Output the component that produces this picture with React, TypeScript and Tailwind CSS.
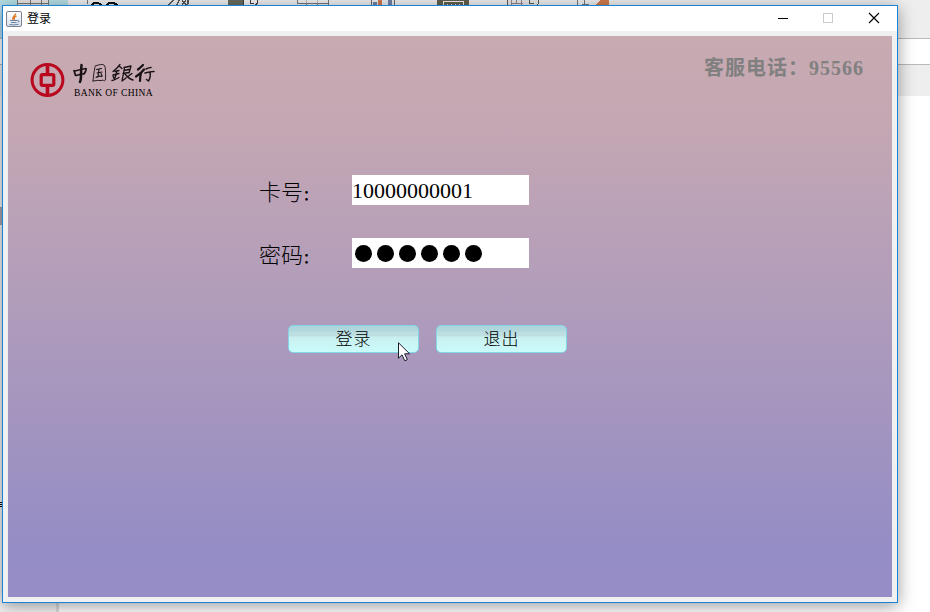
import React from "react";

const sans = "font-['Liberation_Sans','Noto_Sans_CJK_SC',sans-serif]";
const serif = "font-['Liberation_Serif','Noto_Sans_CJK_SC',serif]";

function ToolbarIcons() {
  return (
    <svg className="block h-[5px] w-full" viewBox="0 0 930 5" shapeRendering="crispEdges" fill="none">
      <rect width="68" height="5" fill="#b5dfe6" />
      <path d="M17 0h32v5H17z" fill="#e6e3e3" />
      <path d="M17.5 0v5M30.5 0v5M41.5 0v5M48.5 0v5M17 3.5h32" stroke="#777575" />
      <path d="M87.5 0v4M297.5 0v4M306.5 0v5M317.5 0v5M328.5 0v5M298 3.5h30" stroke="#777575" />
      <path d="M298 0h30v3h-30z" fill="#f1f1f1" opacity=".6" />
      <path d="M91 5q5-4 11 0M106 5q5-4 12 0" stroke="#111" strokeWidth="2" />
      <path d="M169 5l4-5M179 0l-2 5M182 1l4 3M186 1l-4 3M188 0q1 2-1 5" stroke="#555" strokeWidth="1.5" />
      <path d="M228 0h15v5h-15z" fill="#686b60" />
      <path d="M243 0h15v5h-15z" fill="#f3f3f3" />
      <path d="M243.500 0v5M250.500 0v3h3M257.500 0v3l-2 2" stroke="#443e42" />
      <path d="M371 0h24v5h-24z" fill="#e9edf1" />
      <path d="M373 2h4v3h-4zM388 0h4v5h-4z" fill="#6d80a5" />
      <path d="M378 0h4v5h-4z" fill="#d1784d" />
      <path d="M371.500 0v5M394.500 0v5" stroke="#666458" />
      <path d="M437 0h32v5h-32z" fill="#62604f" />
      <path d="M443.500 5V1.500h20V5" stroke="#eee" />
      <path d="M447 4.500h15" stroke="#ddd" strokeDasharray="1 3" />
      <path d="M507 0h32v5h-32z" fill="#e8e8e8" />
      <path d="M507.500 0v5M538.500 0v3l-1 2M529.500 0v3h4" stroke="#575752" />
      <path d="M511.500 0v5M516.500 0v4M521.500 0v5M511 3.500h12" stroke="#97878b" />
      <path d="M577 0h28v5h-28z" fill="#eee" />
      <path d="M577.500 0v5M584.500 0v5M582 4.500h7" stroke="#777" />
      <path d="M600 0h9v5h-13z" fill="#d17b4c" />
    </svg>
  );
}

function Desktop() {
  return (
    <div className="flex h-full w-full flex-col bg-white">
      <div className="h-[38px] bg-[#eeeeee]">
        <ToolbarIcons />
        <div className="h-[33px] w-2 bg-[#b7dcec]" />
      </div>
      <div className="h-[27px] border-y border-[#bcb7bc] bg-white" />
      <div className="h-[31px] bg-[#eeeeee]" />
      <div className="flex h-[516px]">
        <div className="h-full w-[56px] bg-[#f3f3f3]">
          <div className="mt-[111px] h-[18px] w-[2px] bg-[#aaa7ad]" />
          <div className="mt-[277px] flex flex-col gap-px">
            <div className="h-px w-[2px] bg-black" />
            <div className="h-px w-[2px] bg-black" />
            <div className="h-px w-[2px] bg-black" />
          </div>
        </div>
        <div className="h-full w-[3px] bg-[#dddddd]" />
      </div>
    </div>
  );
}

function JavaIcon() {
  return (
    <svg className="h-4 w-4" viewBox="0 0 16 16" fill="none">
      <defs>
        <linearGradient id="java-bg" x2="0" y2="1">
          <stop stopColor="#fff" />
          <stop offset="1" stopColor="#d9e1ed" />
        </linearGradient>
      </defs>
      <rect x=".5" y=".5" width="15" height="15" rx="1.5" fill="url(#java-bg)" stroke="#7c8193" />
      <path d="M9.600 2.500C10 5 5 5.500 7.300 8.800M10.600 5C7.600 6.200 8 7.200 8.700 8.800" stroke="#df7928" strokeWidth="1.300" />
      <path d="M4 9.500h7.500q3 .2.500 2M5 11.500h5.500M3.500 13.500q4.500 1 9-.2" stroke="#66839f" />
    </svg>
  );
}

function TitleBar() {
  return (
    <header className="flex h-[25px] items-center bg-white pl-[3px] text-black">
      <JavaIcon />
      <h1 className={"ml-[5px] flex-1 text-[12px] leading-[22px] " + sans}>登录</h1>
      <svg className="h-[25px] w-[136px]" viewBox="0 0 136 25" fill="none">
        <path d="M17 12.500h10" stroke="#000" shapeRendering="crispEdges" />
        <path d="M62.500 7.500h9v9h-9z" stroke="#ccc" shapeRendering="crispEdges" />
        <path d="M108 7l10 10M118 7l-10 10" stroke="#000" strokeWidth="1.200" />
      </svg>
    </header>
  );
}

function BankLogo() {
  return (
    <div className="flex items-start">
      <svg className="h-[34px] w-[35px]" viewBox="0 0 35 34" fill="none" stroke="#b9081e">
        <circle cx="17.500" cy="17" r="15.400" strokeWidth="3" />
        <path d="M17.500 2v9M17.500 23v10" strokeWidth="3.600" />
        <rect x="11.200" y="11.700" width="12.600" height="10.600" rx="1.200" strokeWidth="3.200" />
      </svg>
      <div className="ml-[8px] w-[82px] text-black">
        <svg className="block h-[22px] w-[82px]" viewBox="0 0 82 22" fill="none" stroke="#181214" strokeLinecap="round" strokeLinejoin="round">
          <path d="M1 7.500l1.500 5M2 8q5-1.500 11-2.500q.5 2-2 5.500M3 12.500l8-2" strokeWidth="1.700" />
          <path d="M8.500 2q-.5 7-.5 11t-1 6" strokeWidth="2.500" />
          <path d="M22 4q-1.500 7-2 14M22 3q7-2.500 9-1q2 1 1.500 14q0 3-3 1M20 18q5-1 9-.5" strokeWidth=".9" />
          <path d="M23.500 6.500l5-1M24 10l5-1M26 6l-1 8M23 14.500q3-2 6-1M28 10.500l1 2" strokeWidth="1.100" />
          <path d="M47 1.500q-3 4-7 7M46 3l3 2.500M42 8.500l4-1M40 12l6-1.500M44 8q-1 5-3 9M40 13l1 2.500M39 17.500q4-1 7-3" strokeWidth="1.300" />
          <path d="M51 4.500l7-1.500-2 7M51.500 5l-2.500 13 4-3M51 7.500l5-1M50 10.500l6-1M52 11q4 5 8 6M59 10.500l-5 3.500" strokeWidth="1.300" />
          <path d="M70 2q-3 3-5 4.500M71 6.500q-3 4-8 7M68 10q-1 4-1 8" strokeWidth="2.200" />
          <path d="M73 6q3-1.500 5-1.500M72 10q5-1.500 9-1.500M77 9q1 5-1.500 9l-2-1.500" strokeWidth="1.500" />
        </svg>
        <div className="mt-[3px] whitespace-nowrap pl-px font-['Liberation_Serif',serif] text-[9.500px] leading-[10px] tracking-[0.400px]">
          BANK OF CHINA
        </div>
      </div>
    </div>
  );
}

function Field({ label, children }: { label: string; children: React.ReactNode }) {
  return (
    <div className="flex h-[30px]">
      <div className="w-[93px] text-[22px] font-light leading-[31px] text-black font-['Noto_Sans_CJK_SC',sans-serif]">
        {label}<span className="text-[14px] font-bold">：</span>
      </div>
      <div className="h-[30px] w-[177px] bg-white">{children}</div>
    </div>
  );
}

function ActionButton({ children }: { children: React.ReactNode }) {
  return (
    <button className="h-[28px] w-[131px] rounded-[5px] border border-[#83d5e8] bg-[linear-gradient(#acd3dc_0%,#b4d9df_22%,#bddfe2_24%,#bddfe2_38%,#c8efee_42%,#cbf5f5_68%,#c9fcfa_100%)] pb-[3px] text-[17px] font-light leading-[23px] tracking-[1px] text-black font-['Noto_Sans_CJK_SC',sans-serif]">
      {children}
    </button>
  );
}

export default function App() {
  return (
    <div className="relative h-[612px] w-[930px] overflow-hidden">
      <Desktop />
      <section className="absolute left-[2px] top-[5px] flex h-[598px] w-[896px] flex-col border border-[#1883d7] bg-[#f0f0f0] shadow-[0_3px_16px_rgba(0,0,0,0.4)]">
        <TitleBar />
        <main className="mx-[5px] mt-[5px] h-[561px] bg-[linear-gradient(#c8aab1_0%,#c4a7b3_16%,#958dc5_91%,#968dc6_100%)]">
          <div className="flex h-[139px] items-start justify-between pl-[22px] pr-[28px] pt-[27px]">
            <BankLogo />
            <p className={"-mt-[10px] text-[20px] font-bold leading-[30px] tracking-[1px] text-[#808080] " + serif}>客服电话：95566</p>
          </div>
          <form className="ml-[251px] flex flex-col gap-[33px]" onSubmit={(e) => e.preventDefault()}>
            <Field label="卡号">
              <div className="font-['Liberation_Serif',serif] text-[22px] leading-[32px] text-black">10000000001</div>
            </Field>
            <Field label="密码">
              <div className="flex gap-[5px] pl-[3px] pt-[7px]">
                {[0, 1, 2, 3, 4, 5].map((i) => (
                  <span key={i} className="h-[17px] w-[17px] rounded-full bg-black" />
                ))}
              </div>
            </Field>
            <div className="ml-[29px] mt-[24px] flex gap-[17px]">
              <ActionButton>登录</ActionButton>
              <ActionButton>退出</ActionButton>
            </div>
          </form>
        </main>
      </section>
      <svg className="absolute left-[398px] top-[342px] h-[20px] w-[13px]" viewBox="0 0 13 20">
        <path d="M.5.8v15.400l3.500-3.400 2.800 6 2.500-1.200-2.700-5.800h5z" fill="#fff" stroke="#1b1b2b" />
      </svg>
    </div>
  );
}
